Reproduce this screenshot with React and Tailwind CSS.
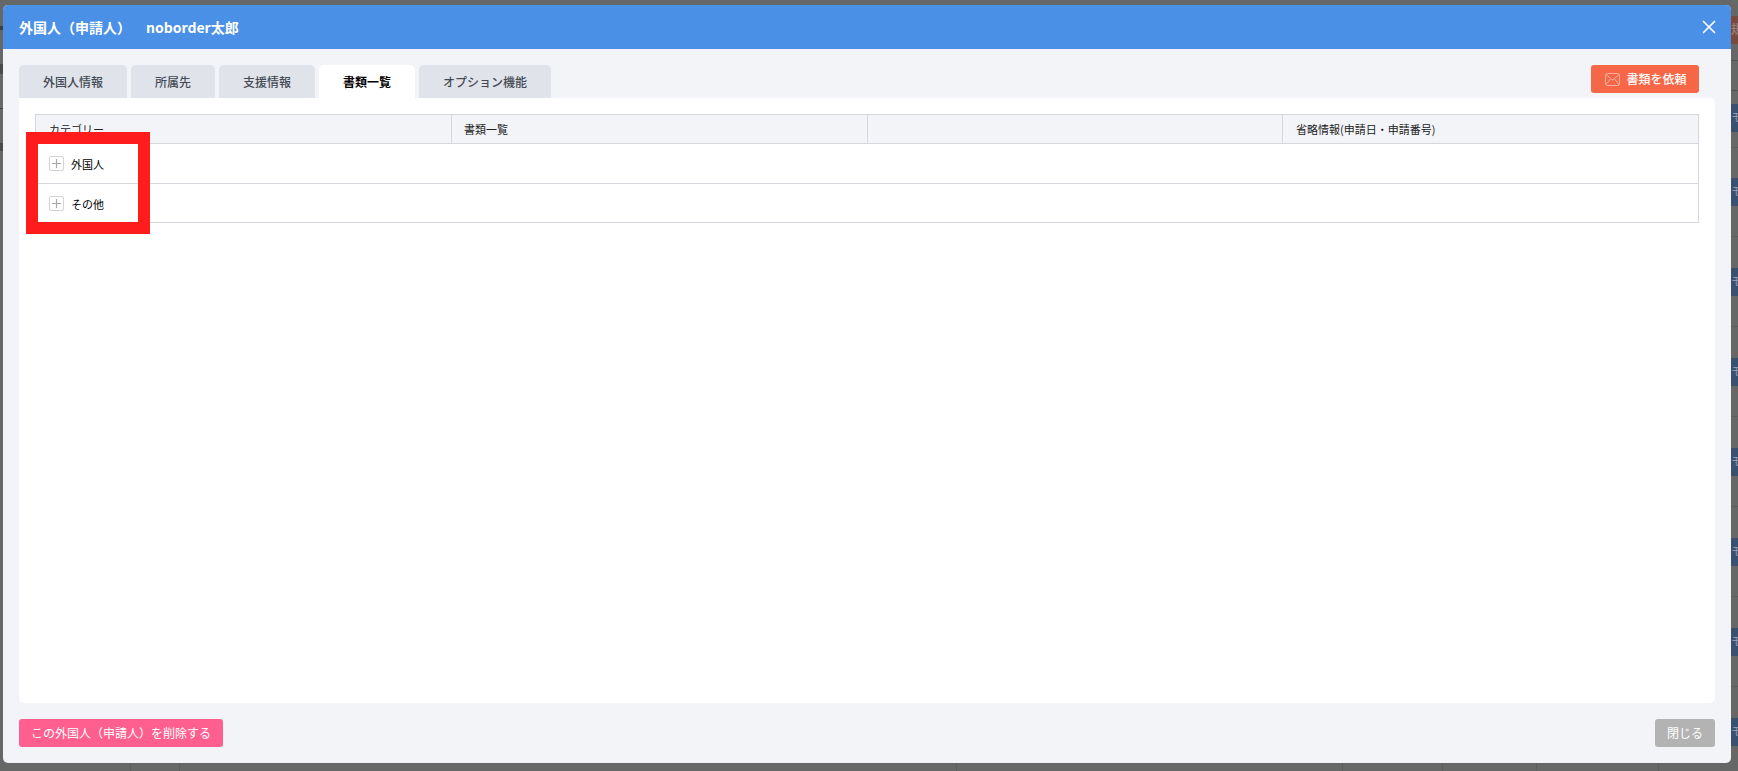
import { X } from 'lucide-react';

const tabs = [
  { label: '外国人情報', w: 'w-[108px]' },
  { label: '所属先', w: 'w-[84px]' },
  { label: '支援情報', w: 'w-[96px]' },
  { label: '書類一覧', w: 'w-[96px]', active: true },
  { label: 'オプション機能', w: 'w-[132px]' },
];

const headers = ['カテゴリー', '書類一覧', '', '省略情報(申請日・申請番号)'];
const chipRows = [0, 1, 2, 3, 4, 5, 6];
const bottomGaps = ['w-[131px]', 'w-[49px]', 'w-[777px]', 'w-[386px]', 'w-[100px]', 'w-[94px]', 'w-[122px]'];

function PlusBox() {
  return (
    <span className="w-[15px] h-[15px] flex items-center justify-center border border-[#d4d4d4] rounded-[2px] bg-white">
      <svg width="9" height="9" viewBox="0 0 9 9">
        <path d="M4.5 0v9M0 4.5h9" stroke="#a8a8a8" strokeWidth="1.2" fill="none" />
      </svg>
    </span>
  );
}

function MailIcon() {
  return (
    <svg width="15" height="13" viewBox="0 0 15 13" fill="none" stroke="#fbb9a8" strokeWidth="0.9">
      <rect x="0.5" y="0.5" width="14" height="12" rx="2" />
      <path d="M1 1.5l6.5 5.5 6.500-5.500M1 11.500l4.500-5.500M14 11.500l-4.500-5.500" />
    </svg>
  );
}

function Chip() {
  return (
    <div className="h-[28px] pt-[4px] bg-[#3b4f6e] text-[12px] leading-[18px] text-[#8f99a8] whitespace-nowrap overflow-hidden">
      モ
    </div>
  );
}

// 背景のページ (モーダルの外に少しだけ見える部分)
function Backdrop() {
  return (
    <div className="absolute inset-0 bg-[#666767] overflow-hidden">
      <div className="flex justify-between items-start">
        <div className="w-[3px] flex flex-col pt-[26px] gap-[34px]">
          <div className="h-[4px] bg-[#3f3f3f]"></div>
          <div className="h-[10px] bg-[#4b4b4b]"></div>
          <div className="h-[1px] bg-[#3f3f3f]"></div>
          <div className="h-[8px] bg-[#4b4b4b]"></div>
        </div>
        <div className="w-[7px] flex flex-col">
          <div className="h-[28px] mt-[16px] pt-[4px] bg-[#7b4a3f] text-[12px] leading-[18px] text-[#a88a82] whitespace-nowrap overflow-hidden">
            規
          </div>
          <div className="h-[1px] mt-[16px] bg-[#555555]"></div>
          <div className="h-[1px] mt-[29px] bg-[#555555]"></div>
          <div className="mt-[13px]">
            <Chip />
          </div>
          <div className="mt-[15px] border-t border-dotted border-[#555555]"></div>
          <div className="h-[30px]"></div>
          {chipRows.map((row) => (
            <div key={row} className="h-[90px]">
              <Chip />
              <div className="mt-[30px] border-t border-dotted border-[#555555]"></div>
            </div>
          ))}
        </div>
      </div>
      <div className="absolute left-0 bottom-0 h-[8px] flex">
        {bottomGaps.map((gap) => (
          <div key={gap} className={`${gap} border-r border-[#5c5d5d]`}></div>
        ))}
      </div>
    </div>
  );
}

export default function App() {
  return (
    <div className="relative w-full h-screen overflow-hidden font-['Noto_Sans_CJK_JP','Noto_Sans',sans-serif]">
      <Backdrop />

      {/* モーダル */}
      <div className="absolute left-[3px] top-[5px] w-[1728px] h-[758px] flex flex-col bg-[#f3f4f8] rounded-[5px] overflow-hidden">
        <div className="h-[44px] shrink-0 flex items-center justify-between pl-[16px] pr-[11px] bg-[#4a90e6] text-white">
          <h1 className="text-[14px] font-bold">
            外国人（申請人）<span className="ml-[15px]">noborder太郎</span>
          </h1>
          <X size={22} strokeWidth={1.8} />
        </div>

        <div className="flex-1 flex flex-col px-[16px] pt-[16px] pb-[16px]">
          <div className="h-[33px] flex justify-between">
            <div className="flex gap-[4px]">
              {tabs.map((tab) => (
                <div
                  key={tab.label}
                  className={`${tab.w} flex items-center justify-center rounded-t-[5px] text-[12px] ${
                    tab.active ? 'bg-white text-black font-bold' : 'bg-[#e0e3ea] text-[#444b55] font-medium'
                  }`}
                >
                  {tab.label}
                </div>
              ))}
            </div>
            <button className="w-[108px] h-[28px] mr-[16px] pl-[2px] flex items-center justify-center gap-[6px] rounded-[3px] bg-[#f66747] text-white text-[12px] font-medium">
              <MailIcon />
              書類を依頼
            </button>
          </div>

          {/* 書類テーブル */}
          <div className="h-[605px] bg-white rounded-b-[5px] rounded-tr-[5px] px-[16px] pt-[16px]">
            <div className="border border-[#d5d7dc] text-[11px] text-[#222222]">
              <div className="h-[29px] grid grid-cols-[416px_416px_415px_1fr] bg-[#f3f4f8] border-b border-[#d5d7dc]">
                {headers.map((header, index) => (
                  <div
                    key={index}
                    className={`flex items-center ${index === 1 ? 'pl-[12px]' : 'pl-[13px]'} ${
                      index < 3 ? 'border-r border-[#d5d7dc]' : ''
                    }`}
                  >
                    {header}
                  </div>
                ))}
              </div>
              {['外国人', 'その他'].map((name, index) => (
                <div
                  key={name}
                  className={`flex items-center gap-[7px] pl-[13px] text-black ${
                    index === 0 ? 'h-[40px] border-b border-[#d5d7dc]' : 'h-[38px]'
                  }`}
                >
                  <PlusBox />
                  <span className="mt-[2px]">{name}</span>
                </div>
              ))}
            </div>
          </div>

          <div className="flex justify-between mt-[16px]">
            <button className="w-[204px] h-[28px] rounded-[3px] bg-[#ff5f8f] text-white text-[12px]">
              この外国人（申請人）を削除する
            </button>
            <button className="w-[60px] h-[28px] rounded-[3px] bg-[#b3b3b3] text-white text-[12px]">
              閉じる
            </button>
          </div>
        </div>
      </div>

      {/* 赤枠の注釈 */}
      <div className="absolute left-[26px] top-[132px] w-[124px] h-[102px] border-[12px] border-[#ff1c1c]"></div>
    </div>
  );
}
